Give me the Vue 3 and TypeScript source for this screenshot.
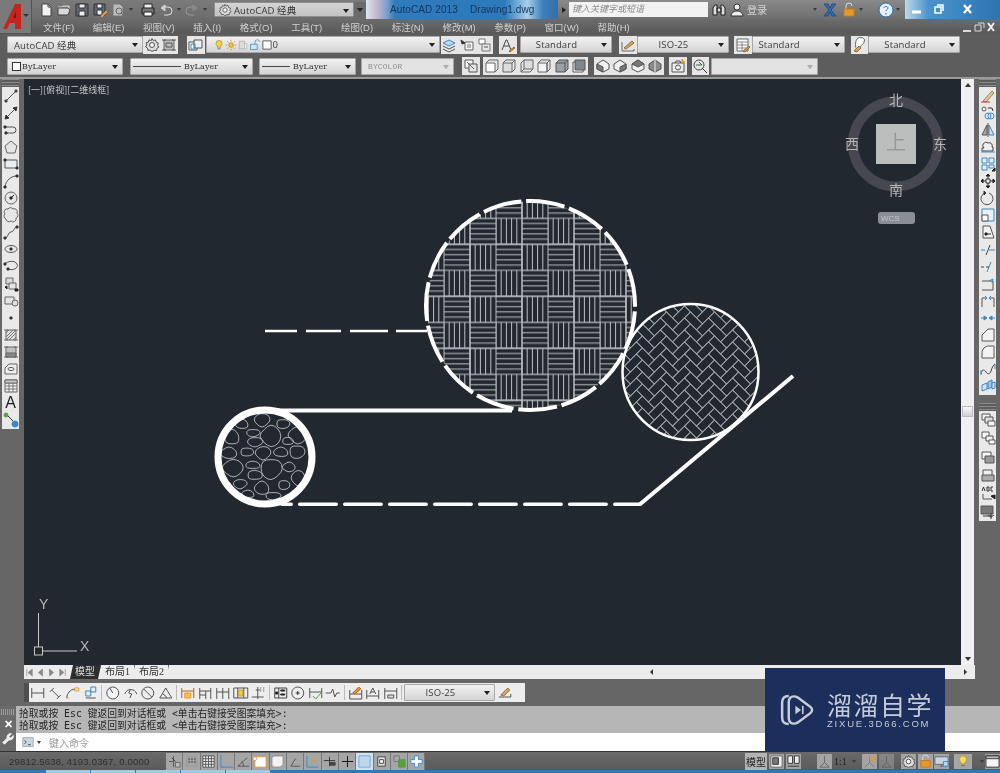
<template>
  <div class="cad">
    <header class="head">
      <div class="logo">
        <svg width="32" height="32" viewBox="0 0 32 32">
          <path d="M3 29 15 4h6v25h-6v-6h-5l-3 6Z" fill="#c4261d" />
          <path d="M13 18h3v-7Z" fill="#7d1712" />
          <path d="M23 14h6l-3 3Z" fill="#333" />
        </svg>
      </div>
      <div class="title">
        <div class="qat">
          <template v-for="q in qat" :key="q">
            <i v-if="q.startsWith('caret')" class="caret" />
            <Ico v-else :name="q" class="qat-ico" />
          </template>
        </div>
        <div class="combo wk-top">
          <Ico name="gear" :size="14" />
          <span>AutoCAD 经典</span>
          <b class="arrow" />
        </div>
        <div class="more"><b class="arrow" /></div>
        <div class="glass">
          <span class="app">AutoCAD 2013</span>
          <span class="doc">Drawing1.dwg</span>
        </div>
        <div class="search-wrap">
          <i class="play" />
          <div class="search">键入关键字或短语</div>
          <Ico name="binoc" class="ti" />
          <Ico name="user" class="ti user" />
          <span class="login">登录</span>
          <i class="caret far" />
          <Ico name="xapp" class="ti" />
          <Ico name="lockapp" class="ti" />
          <i class="caret" />
          <Ico name="help" class="ti help" />
          <i class="caret" />
        </div>
        <div class="win">
          <svg width="80" height="16" viewBox="0 0 80 16">
            <path d="M7 10h9" stroke="#fff" stroke-width="3" />
            <path d="M30 5h6v6h-6ZM32 3h6v6" stroke="#fff" stroke-width="1.5" fill="none" />
            <path d="M59 3l7 8M66 3l-7 8" stroke="#fff" stroke-width="2.4" />
          </svg>
        </div>
      </div>
      <nav class="menu">
        <span v-for="m in menus" :key="m">{{ m }}</span>
        <div class="doc-btns">
          <svg width="32" height="12" viewBox="0 0 32 12">
            <path d="M0 10h8" stroke="#ddd" stroke-width="2" />
            <path d="M12 4h6v6h-6ZM15 2h6v5" stroke="#ddd" fill="none" />
            <path d="M25 2l6 8M31 2l-6 8" stroke="#eee" stroke-width="2" />
          </svg>
        </div>
      </nav>
    </header>

    <div class="row row1">
      <template v-for="(it, i) in row1" :key="i">
        <i v-if="it.gap" class="gap" :style="{ width: it.gap + 'px' }" />
        <div v-else-if="it.icon" class="tool"><Ico :name="it.icon" /></div>
        <div v-else class="combo" :class="it.align" :style="{ width: it.w + 'px' }">
          <Ico v-for="p in it.pre" :key="p" :name="p" :size="12" class="pre" />
          <span>{{ it.label }}</span>
          <b class="arrow" />
        </div>
      </template>
    </div>

    <div class="row row2">
      <template v-for="(it, i) in row2" :key="i">
        <i v-if="it.gap" class="gap" :style="{ width: it.gap + 'px' }" />
        <div v-else-if="it.icon" class="tool"><Ico :name="it.icon" /></div>
        <div v-else class="combo mono" :class="it.align" :style="{ width: it.w + 'px' }">
          <i v-if="it.swatch" class="swatch" />
          <i v-if="it.line" class="ltype" :style="{ width: it.line + 'px' }" />
          <span>{{ it.label }}</span>
          <b class="arrow" />
        </div>
      </template>
    </div>

    <main class="main">
      <aside class="side left">
        <div class="grip" />
        <div class="bar">
          <template v-for="n in leftTools" :key="n">
            <span v-if="n === 'A'" class="glyph">A</span>
            <Ico v-else :name="n" />
          </template>
        </div>
      </aside>

      <div class="canvas">
        <svg class="draw" viewBox="24 79 937 586">
          <defs>
            <pattern id="basket" x="496" y="218.3" width="52" height="52" patternUnits="userSpaceOnUse">
              <path :d="basketPath" stroke="#bcbec1" fill="none" stroke-width="1" />
            </pattern>
            <clipPath id="herring-clip"><circle cx="690.5" cy="372" r="68" /></clipPath>
            <clipPath id="gravel-clip"><circle cx="265" cy="457" r="46" /></clipPath>
          </defs>

          <text x="28" y="93" class="vp">[一][俯视][二维线框]</text>

          <!-- hatched profile -->
          <circle cx="530.5" cy="305.5" r="104" fill="url(#basket)" />
          <circle cx="530.5" cy="305.5" r="104.5" class="thick" stroke-dasharray="39 4.77" stroke-dashoffset="-6" />
          <path :d="herringPath" clip-path="url(#herring-clip)" stroke="#a9acb0" fill="none" />
          <circle cx="690.5" cy="372" r="68" class="mid" />
          <path :d="gravelPath" clip-path="url(#gravel-clip)" stroke="#aeb0b3" fill="none" />
          <circle cx="265" cy="457" r="47" class="fat" />
          <path d="M278 410.500H512" class="thick" />
          <path d="M265 331H427" class="dash" stroke-dasharray="32 9 35 9 38 8 32 0" />
          <path d="M640 504.300 793 376" class="thick" />
          <path d="M282 504.300H640" class="thick thin4" stroke-linecap="round" stroke-dasharray="36.500 8.500" stroke-dashoffset="27.300" />

          <!-- ucs -->
          <g class="ucs">
            <path d="M38.500 613v34M43 651h34" />
            <rect x="34.500" y="647" width="8" height="8" />
            <text x="39" y="609">Y</text>
            <text x="80" y="651">X</text>
          </g>

          <!-- view cube -->
          <circle cx="895.500" cy="144" r="42.500" class="ring" />
          <rect x="876" y="124" width="40" height="40" fill="#bcbdbd" />
          <text x="896" y="150" class="cube-top">上</text>
          <text x="896" y="105" class="dir">北</text>
          <text x="896" y="195" class="dir">南</text>
          <text x="852" y="149" class="dir">西</text>
          <text x="940" y="149" class="dir">东</text>
          <rect x="878" y="212" width="37" height="12" rx="3" fill="#8b8e96" />
          <text x="881" y="221" class="wcs">WCS</text>
        </svg>
      </div>

      <div class="vscroll">
        <b class="up" />
        <i class="thumb" />
        <b class="down" />
      </div>

      <aside class="side right">
        <div class="grip" />
        <div class="bar modify">
          <Ico v-for="n in rightTools" :key="n" :name="n" />
        </div>
        <div class="grip second" />
        <div class="bar order">
          <Ico v-for="n in orderTools" :key="n" :name="n" />
        </div>
      </aside>
    </main>

    <div class="tabs">
      <div class="tabs-l">
        <Ico v-for="n in navs" :key="n" :name="n" :size="11" class="nav" />
        <span class="tab on">模型</span>
        <span class="tab">布局1</span>
        <span class="tab">布局2</span>
      </div>
      <div class="hscroll"><b class="lt" /><b class="rt" /></div>
    </div>

    <div class="dimband">
      <div class="dimbar">
        <template v-for="(n, i) in dimTools" :key="i">
          <i v-if="n === '|'" class="sep" />
          <div v-else-if="n === 'combo'" class="combo center dimcombo"><span>ISO-25</span><b class="arrow" /></div>
          <Ico v-else :name="n" class="dim-ico" />
        </template>
      </div>
    </div>

    <section class="cmd">
      <div class="cmd-side">
        <i class="dots" />
        <span class="close">✕</span>
        <Ico name="wrench" :size="14" />
      </div>
      <div class="cmd-body">
        <div class="history">
          <p v-for="n in 2" :key="n">拾取或按 Esc 键返回到对话框或 &lt;单击右键接受图案填充&gt;:</p>
        </div>
        <div class="input">
          <Ico name="prompt" :size="14" />
          <i class="caret dark" />
          <span>键入命令</span>
        </div>
      </div>
    </section>

    <footer class="status">
      <span class="coords">29812.5638, 4193.0367, 0.0000</span>
      <div class="toggles">
        <div v-for="n in toggles" :key="n" class="toggle" :class="{ active: n === 'trans' }"><Ico :name="n" :size="15" /></div>
      </div>
      <div class="st-right">
        <span class="model">模型</span>
        <Ico name="layout" :size="15" class="m2" />
        <Ico name="viewsplit" :size="15" class="m2" />
        <Ico name="anno" :size="15" class="scale" />
        <span class="ratio">1:1</span>
        <i class="caret dark ratio-caret" />
        <Ico name="annoy" :size="15" class="m4" />
        <Ico name="anno" :size="15" class="m2 faded" />
        <Ico name="gear" :size="15" class="m7" />
        <Ico name="lockapp" :size="15" class="m2" />
        <Ico name="hw" :size="15" class="m1" />
        <div class="bulb"><Ico name="bulb" :size="14" /></div>
        <i class="caret dark bulb-caret" />
        <Ico name="clean" :size="15" />
      </div>
    </footer>
    <div class="taskbar">
      <i v-for="n in 5" :key="n" class="task" />
    </div>

    <div class="mark">
      <svg width="38" height="38" viewBox="0 0 42 46" fill="none" stroke="#c6ccd6">
        <path d="M11 6C6 6 3 9 3 14v18c0 5 3 8 8 8" stroke-width="3" />
        <path d="M13 8c2-2 6-2 9 0l15 11c3 2 3 6 0 8L22 38c-3 2-7 2-9 0-1-1-2-3-2-5V13c0-2 1-4 2-5Z" stroke-width="3" />
        <path d="M19 18v10l7-5Z" fill="#c6ccd6" stroke="none" />
        <path d="M28 18v10" stroke-width="2" />
      </svg>
      <div class="mark-text">
        <strong>溜溜自学</strong>
        <small>ZIXUE.3D66.COM</small>
      </div>
    </div>
  </div>
</template>

<script setup lang="ts">
import { h } from 'vue'
import type { FunctionalComponent } from 'vue'

type Part = [string, string?, string?]

const INK = '#5c5c5c'
const BL = '#3d87c4'
const OR = '#e39a2d'
const GR = '#5a9e46'
const RD = '#c0392b'
const PALE = '#e6e6e6'

const icons: Record<string, Part[]> = {
  new: [['M4 2h6l3 3v9H4Z', '#444', '#f2f2f2'], ['M10 2v3h3', '#444']],
  open: [['M2 5h4l1-1h6v3', '#ddd', '#999'], ['M2 6h10l2 2-2 5H2Z', '#444', '#d8d8d8']],
  save: [['M2 2h12v12H2Z', '#333', '#5d6873'], ['M5 2h6v4H5ZM5 9h6v5H5Z', '#333', '#eee']],
  saveas: [['M2 2h11v11H2Z', '#333', '#5d6873'], ['M5 2h5v4H5ZM5 8h5v5H5Z', '#333', '#eee'], ['M9 14l5-5 1 1-5 5Z', OR, OR]],
  plotp: [['M3 2h7l3 3v9H3Z', '#777', '#bbb'], ['M11 11l3 3M6 9a3 3 0 1 0 6 0 3 3 0 0 0-6 0', '#666']],
  print: [['M4 6V2h8v4', '#222', '#eee'], ['M2 6h12v6H2Z', '#222', '#777'], ['M4 10h8v4H4Z', '#222', '#fff']],
  undo: [['M3 6l4-3v2h3a4 4 0 0 1 0 8H6', '#ddd'], ['M3 6l4 3V3Z', '#ccc', '#ccc']],
  redo: [['M13 6 9 3v2H6a4 4 0 0 0 0 8h4', '#999'], ['M13 6 9 9V3Z', '#888', '#888']],
  gear: [['M8 1.500l1.200 2 2.300-.6.6 2.300 2.300.8-.8 2.300 1.400 1.700-2 1.200-.4 2.300-2.300-.2L8 14.500l-1.800-1.400-2.300.2-.4-2.300-2-1.200L2.900 8 2.100 5.700l2.300-.5.6-2.300 2.300.6Z', '#555', '#ddd'], ['M5.500 8a2.500 2.500 0 1 0 5 0 2.500 2.500 0 0 0-5 0', '#555', '#f4f4f4']],
  wksp: [['M3 3h10v10H3Z', '#666', '#bbb'], ['M1 3h4M11 3h4M1 13h4M11 13h4M5 6h6v4H5Z', '#555']],
  binoc: [['M2 13V6l2-3h2v10ZM14 13V6l-2-3h-2v10ZM6 6h4v4H6Z', '#222', '#ddd']],
  user: [['M5 5a3 3 0 1 0 6 0 3 3 0 0 0-6 0', '#333', '#eee'], ['M2 14c0-3 3-5 6-5s6 2 6 5Z', '#333', '#eee']],
  xapp: [['M2 2l5 6-5 6h4l2-4 2 4h4L9 8l5-6h-4L8 6 6 2Z', '#1f4f8c', '#2f6db3']],
  lockapp: [['M5 7V4a3 3 0 0 1 6 0', '#ddd'], ['M3 7h10v7H3Z', '#c77a1a', OR]],
  help: [['M1 8a7 7 0 1 0 14 0A7 7 0 0 0 1 8', '#2b6cb0', '#e6f0fa'], ['M6 6c0-2 4-2 4 0 0 1.500-2 1.500-2 3M8 11v1.500', '#2b6cb0']],
  layerp: [['M1 5h8v8H1Z', '#555', '#fff'], ['M6 3h8v8H6Z', '#555', '#e8f0f6'], ['M3 7h4v5H3Z', BL, 'none']],
  bulbon: [['M4 6a4 4 0 1 1 8 0c0 2-2 3-2 5H6c0-2-2-3-2-5Z', '#a98b1a', '#f1d34c'], ['M6 13h4', '#666']],
  sun: [['M5 8a3 3 0 1 0 6 0 3 3 0 0 0-6 0', '#b57f18', '#f2c744'], ['M8 1v2M8 13v2M1 8h2M13 8h2M3 3l1.500 1.500M11.500 11.500 13 13M13 3l-1.500 1.500M3 13l1.500-1.500', '#b57f18']],
  frz: [['M3 3h7v10H3Z', '#aaa', '#ddd'], ['M10 6h3v7h-3Z', '#bbb', '#eee']],
  unlock: [['M8 7V4a3 3 0 0 1 6 0', BL], ['M2 7h9v7H2Z', BL, '#cfe4f5']],
  square: [['M2.500 2.500h11v11h-11Z', '#333', '#fff']],
  lay1: [['M2 6l6-3 6 3-6 3Z', BL, '#bcd8ee'], ['M2 9l6 3 6-3M2 12l6 3 6-3', '#555']],
  lay2: [['M6 5h8v8H6Z', '#666', '#f4f4f4'], ['M2 3l4 3-3 1Z', '#333', '#333'], ['M8 8h4M8 10h4', '#777']],
  lay3: [['M3 2h6v5H3Z', '#777', '#fff'], ['M6 7h8v7H6Z', '#777', '#e8e8e8'], ['M8 10h4', '#555']],
  textst: [['M2 13 6 3h1l4 10M4 9h5', '#444'], ['M9 14l5-4 1 1-5 4Z', '#9a6a33', OR]],
  dimst: [['M2 5v9h12v-2', '#666'], ['M4 11l8-7 2 2-8 6Z', '#9a6a33', '#d9a663']],
  tablest: [['M2 2h11v12H2Z', '#666', '#fff'], ['M2 5h11M2 8h11M2 11h11M7 5v9', '#888'], ['M8 14l6-5 1 1-5 5Z', '#9a6a33', OR]],
  mleaderst: [['M6 2a4 3 0 0 1 7 3c0 2-5 5-7 8-2-3-2-8 0-11Z', '#666', '#fff'], ['M3 14l5-5 2 2-4 4Z', '#9a6a33', '#d9a663']],
  plotst: [['M2 2h8v8H2Z', '#555', '#fff'], ['M6 6h8v8H6Z', '#555', '#e4e4e4'], ['M4 4l7 7', '#666']],
  cube0: [['M2 5h9v9H2Z', '#666', '#fff'], ['M2 5l3-3h9v9l-3 3', '#666']],
  cube1: [['M2 5h9v9H2Z', '#666', '#ddd'], ['M2 5l3-3h9v9l-3 3M11 5l3-3', '#666']],
  cube2: [['M5 2h9v9H5Z', '#666', '#ddd'], ['M2 5l3-3M2 5v9h9l3-3M2 14l3-3', '#666']],
  cube3: [['M2 5h9v9H2Z', '#666', '#f4f4f4'], ['M2 5l3-3h9v9l-3 3V5l3-3', '#666']],
  cube4: [['M2 5l3-3h9v9l-3 3H2Z', '#555', '#9aa2a9'], ['M2 5h9v9M11 5l3-3', '#555']],
  cube5: [['M2 4h10v10H2Z', '#555', '#fff'], ['M4 2h10v10H4Z', '#555', '#7f878e']],
  iso1: [['M8 2l6 4v5l-6 3-6-3V6Z', '#555', '#f0f0f0'], ['M2 6l6 3v5l-6-3Z', '#555', '#777']],
  iso2: [['M8 2l6 4v5l-6 3-6-3V6Z', '#555', '#f0f0f0'], ['M14 6 8 9v5l6-3Z', '#555', '#777']],
  iso3: [['M8 2l6 4v5l-6 3-6-3V6Z', '#555', '#f0f0f0'], ['M2 6l6-4 6 4-6 3Z', '#555', '#777']],
  iso4: [['M8 2l6 4v5l-6 3-6-3V6Z', '#555', '#888'], ['M8 2v12', '#eee']],
  camera: [['M2 5h12v9H2Z', '#555', '#eee'], ['M5 5l1-2h4l1 2M5.500 9.500a2.500 2.500 0 1 0 5 0 2.500 2.500 0 0 0-5 0', '#555'], ['M12 1l1 2 2 1-2 1-1-1Z', OR, OR]],
  zoomp: [['M2 7a5 5 0 1 0 10 0A5 5 0 0 0 2 7', '#444', '#e6e6e6'], ['M10 10l5 5', '#333'], ['M4 7h6L7 4', '#2f6f3a']],
  line: [['M3 13 13 3', '#555'], ['M2 12h2v2H2ZM12 2h2v2h-2Z', '#444', '#444']],
  xline: [['M3 13 13 3', '#555'], ['M2 14l1-4 3 3ZM14 2l-1 4-3-3Z', '#333', '#333']],
  pline: [['M2 5h8a3 3 0 0 1 0 6H3', '#555'], ['M1 4h2v2H1ZM2 10h2v2H2Z', '#333', '#333']],
  polygon: [['M8 2l6 5-2 7H4L2 7Z', '#666', PALE]],
  rect: [['M2 4h12v8H2Z', '#555', '#e8eef3'], ['M1 3h2v2H1ZM13 11h2v2h-2Z', '#333', '#333']],
  arc: [['M2 14C3 7 8 3 14 3', '#555'], ['M1 13h2v2H1ZM13 2h2v2h-2Z', '#333', '#333']],
  circle: [['M2 8a6 6 0 1 0 12 0A6 6 0 0 0 2 8', '#666', '#e6e6e6'], ['M8 8l3-3', '#222'], ['M7 7h2v2H7Z', '#222', '#222']],
  cloud: [['M5 2a3 3 0 0 1 5 0 3 3 0 0 1 4 4 3 3 0 0 1-1 5 3 3 0 0 1-5 3 3 3 0 0 1-5-2 3 3 0 0 1-1-5 3 3 0 0 1 3-5Z', '#666', PALE]],
  spline: [['M2 14C5 14 5 8 8 8s3-5 6-5', '#555'], ['M1 13h2v2H1ZM13 2h2v2h-2Z', '#333', '#333']],
  ellipse: [['M14 8c0 2-3 3.500-6 3.500S2 10 2 8s3-3.500 6-3.500S14 6 14 8Z', '#555', '#e6e6e6'], ['M7 7h2v2H7Z', '#333', '#333']],
  earc: [['M2 6c2-3 10-4 12 0s-4 7-9 5', '#555'], ['M4 10h2v2H4ZM1 5h2v2H1Z', '#333', '#333']],
  insert: [['M3 2h7v6H3Z', '#666', '#ddd'], ['M6 7h7v6H6Z', '#666', PALE], ['M2 11l2-1v3ZM12 13h3v2h-3Z', '#222', '#222']],
  block: [['M2 4h9v7H2Z', '#666', PALE], ['M9 10a3 3 0 1 0 6 0 3 3 0 0 0-6 0', '#666', '#ddd']],
  point: [['M7 7h2v2H7Z', '#333', '#333']],
  hatch: [['M3 3h10v10H3Z', '#666', '#e0e0e0'], ['M3 6l3-3M3 10l7-7M3 13 13 3M6 13l7-7M10 13l3-3M1 3h4M11 3h4M1 13h4M11 13h4', '#777']],
  gradient: [['M3 3h10v10H3Z', '#666', '#c0c0c0'], ['M3 9h10v4H3Z', '#666', '#888'], ['M1 3h4M11 3h4M1 13h4M11 13h4', '#666']],
  region: [['M2 7l4-4h8v10H2Z', '#666', '#eee'], ['M5 8c0-2 6-2 6 0s-6 2-6 0Z', '#555']],
  table: [['M2 2h12v12H2Z', '#666', '#f4f4f4'], ['M2 5h12M2 8h12M2 11h12M6 5v9M10 5v9', '#777'], ['M2 2h12v3H2Z', '#666', '#c9c9c9']],
  addsel: [['M1 3a2 2 0 1 0 4 0 2 2 0 0 0-4 0', GR, GR], ['M9 12a3 3 0 1 0 6 0 3 3 0 0 0-6 0', BL, BL], ['M5 4l5 5', '#333']],
  erase: [['M3 13 12 3l2 2-8 9Z', '#a08354', '#dfc79d'], ['M1 14h9', RD]],
  copy: [['M2 4a2 2 0 1 0 4 0 2 2 0 0 0-4 0', '#555', '#fff'], ['M8 11a3 3 0 1 0 6 0 3 3 0 0 0-6 0M5 11a3 3 0 1 0 6 0 3 3 0 0 0-6 0', BL], ['M8 3h4l1 3', '#333']],
  mirror: [['M7 3v10H2Z', '#555', '#aaa'], ['M9 3v10h5Z', BL, '#cfe4f5'], ['M8 1v14', '#555']],
  offset: [['M4 9a3 3 0 0 1 4-5 3 3 0 0 1 4 4h1v4H2V9Z', '#444', '#eee'], ['M1 13h14', BL]],
  array: [['M2 2h5v5H2ZM9 2h5v5H9ZM2 9h5v5H2ZM9 9h5v3H9Z', BL, '#e8f2fa'], ['M12 15l3-3v3Z', '#222', '#222']],
  move: [['M8 1v14M1 8h14', '#333'], ['M6 3l2-2 2 2ZM6 13l2 2 2-2ZM3 6 1 8l2 2ZM13 6l2 2-2 2Z', '#222', '#222'], ['M6 6h4v4H6Z', '#333', '#eee']],
  rotate: [['M5 3a6 6 0 1 0 4 0', '#555'], ['M4 1l2 2-2 2Z', '#333', '#333']],
  scale: [['M2 2h12v12H2Z', BL, '#e8f2fa'], ['M2 8h6v6H2Z', '#555', '#fff']],
  stretch: [['M3 2h7l4 12H3Z', '#555', '#f2f2f2'], ['M7 10h4', '#222'], ['M5 9h2v2H5Z', '#222', '#222']],
  trim: [['M10 3 6 13', '#444'], ['M1 8h4M9 8h6', BL]],
  extend: [['M11 3 7 13', BL], ['M1 8h3M6 8h3', '#444']],
  brk1: [['M2 5h11v9H2', '#555'], ['M9 5l4-2-1 4', BL]],
  brk2: [['M2 14V5h4M10 5h4v9', '#555'], ['M5 3l2 2-2 2M11 3 9 5l2 2', BL]],
  join: [['M1 8h5M10 8h5', BL], ['M4 6l3 2-3 2ZM12 6 9 8l3 2Z', BL, BL]],
  chamfer: [['M2 14V8l6-6h6v12Z', '#555', '#f2f2f2']],
  fillet: [['M2 14V9c0-4 3-7 7-7h5v12Z', '#555', '#f2f2f2']],
  blend: [['M1 13c1-5 3-5 5-2s4 2 5-1 2-6 4-7', '#444'], ['M1 14V9M15 3v5', BL]],
  explode: [['M2 7l5-2v6l-5 2Z', BL, '#cfe4f5'], ['M8 4l4-2v7l-4 2Z', BL, '#9fc8e8'], ['M12 5l3-1v6l-3 1Z', BL, '#cfe4f5']],
  ord1: [['M2 2h8v6H2Z', '#555', '#f4f4f4'], ['M5 5h8v6H5Z', '#555', '#ddd'], ['M8 9h7v5H8Z', '#555', '#f4f4f4']],
  ord2: [['M2 2h7v6H2Z', '#555', '#fff'], ['M6 6h7v5H6Z', '#555', '#f2f2f2'], ['M9 10h6v4H9Z', '#555', '#fff']],
  ord3: [['M2 3h9v7H2Z', '#555', '#f8f8f8'], ['M5 7h9v7H5Z', '#555', '#999']],
  ord4: [['M3 3h9v7H3Z', '#555', '#eee'], ['M2 8h12v6H2Z', '#555', '#aaa']],
  abc: [['M2 6 3.500 2 5 6M7 2h2v4H7ZM13 2h-2v4h2', '#333'], ['M3 9v5h9', '#555'], ['M11 11l4 3v-4Z', '#222', '#222']],
  hatchb: [['M1 2h12v8H1Z', '#555', '#777'], ['M3 12h9M11 9v6', '#333'], ['M8 11l3 2 3-2', '#333']],
  dimlin: [['M2 3v10M14 3v10M2 8h12', '#555']],
  dimali: [['M2 7l4-4M9 14l4-4M4 5l7 7', '#555']],
  dimarc: [['M2 13a9 9 0 0 1 8-9', '#555'], ['M10 3h4v3h-4ZM2 13h2', OR]],
  dimord: [['M8 2h5v5H8ZM3 6h5v5H3Z', BL], ['M3 13h10', '#555']],
  dimrad: [['M2 8a6 6 0 1 0 12 0A6 6 0 0 0 2 8', '#555', '#f5f5f5'], ['M8 8l-3-5', '#555']],
  dimjog: [['M2 9c2-6 10-6 12 0', '#555'], ['M8 4l-2 4 3 1-2 4', '#555']],
  dimdia: [['M2 8a6 6 0 1 0 12 0A6 6 0 0 0 2 8', '#555'], ['M4 4l8 8', '#555']],
  dimang: [['M2 13h12L8 3Z', '#555'], ['M5 9a6 6 0 0 1 4 4', '#555']],
  dimq: [['M2 3v10M14 3v10M2 6h12', '#a8651e'], ['M5 8h6v5H5Z', OR, '#f3c24e']],
  dimbase: [['M2 3v11M13 3v11M2 6h11', '#555'], ['M2 10h6M8 6v8', '#555']],
  dimcont: [['M2 3v11M8 3v11M14 3v11M2 7h12', '#555']],
  dimsp: [['M1 3h14v10H1Z', '#555'], ['M5 3v10M11 3v10', '#555'], ['M6 5h4v6H6Z', '#c8a21e', '#eccf4b']],
  dimbrk: [['M8 2v12M2 12h12', '#555'], ['M11 2v5M14 2v5', '#999'], ['M6 5h4', '#555']],
  tol: [['M2 3h12v10H2Z', '#444'], ['M6 3v10', '#444'], ['M3 7h2v2H3ZM8 5h4v1H8ZM8 9h4v1H8Z', '#222', '#222']],
  center: [['M2 8a6 6 0 1 0 12 0A6 6 0 0 0 2 8', '#555'], ['M6 8h4M8 6v4', '#333']],
  dimins: [['M2 3v10M14 3v10M2 7h12', '#555'], ['M5 11l3 3 6-7', GR]],
  dimjogl: [['M1 8h5l2-4 2 8 2-4h3', '#555']],
  dimedit: [['M2 5v9h12v-9M2 9h12', '#555'], ['M5 8l6-6 2 2-6 5Z', '#a8651e', OR]],
  dimtedit: [['M2 5v9M14 5v9M2 11h12', '#555'], ['M5 9l3-6 3 6M6 7h4', '#555']],
  dimupd: [['M2 3v11M14 3v11M2 6h12', '#555'], ['M5 10h6v3H5Z', '#555', '#ddd']],
  dimsave: [['M2 12h12V9', '#555'], ['M4 10l7-7 2 2-6 6Z', '#9a6a33', '#d9a663']],
  infer: [['M2 8h5M7 2v12', '#555'], ['M9 9h5v5H9Z', '#666', '#bbb'], ['M5 4l4 4', '#333']],
  snapm: [['M3 3h10v10H3Z', '#9a9a9a'], ['M5 5h1v1H5ZM8 5h1v1H8ZM11 5h1v1h-1ZM5 8h1v1H5ZM8 8h1v1H8ZM11 8h1v1h-1Z', '#666', '#666']],
  grid: [['M2 2h12v12H2Z', '#555', '#eee'], ['M5 2v12M8 2v12M11 2v12M2 5h12M2 8h12M2 11h12', '#555']],
  ortho: [['M2 1v13h13', BL]],
  polar: [['M2 13h12M2 13 12 4M8 13a6 6 0 0 0-2-5', '#555']],
  osnap: [['M2 3h12v11H2Z', OR, '#fff'], ['M2 3a2 2 0 1 0 .01 0', OR, '#f4f4f4']],
  otrack: [['M4 2h10v9l-3 3H2V4Z', '#888', '#f2f2f2'], ['M2 14l2-2', OR]],
  ducs: [['M3 13 8 5M3 13h10', '#555']],
  dyn: [['M2 2v12h12', BL], ['M3 13 13 3', OR], ['M7 6h4v4H7Z', OR]],
  lwt: [['M2 7h12', '#333', 'none'], ['M8 3v10', '#333'], ['M8 9h6v3H8Z', '#444', '#444']],
  cross: [['M8 2v12M2 8h12', '#111']],
  trans: [['M2 2h12v12H2Z', '#7aa9d6', '#bdd6ec']],
  qp: [['M4 3h8v10H4Z', '#444', '#ddd'], ['M6 6h4v4H6Z', '#444', '#fff']],
  cycle: [['M7 6h7v8H7Z', GR, GR], ['M2 2h6v6H2Z', '#777', 'none']],
  plus: [['M6 2h4v4h4v4h-4v4H6v-4H2V6h4Z', BL, '#fff']],
  layout: [['M2 2h12v12H2Z', '#666', '#eee'], ['M4 4h6v7H4Z', '#333', '#777']],
  viewsplit: [['M2 2h5v8H2ZM9 2h5v8H9Z', '#333', '#eee'], ['M2 13h12', '#333']],
  anno: [['M8 2v7M8 9l-5 5M8 9l5 5M3 14h10', '#666']],
  annoy: [['M8 3v6M8 9l-5 5M8 9l5 5', '#777'], ['M11 2l1 2 2 1-2 1-1 2-1-2-2-1 2-1Z', OR, OR]],
  hw: [['M1 3h14v8H1Z', '#667', '#cbd5df'], ['M6 13h4M8 11v2', '#667'], ['M10 8h5v5h-5Z', BL, '#bcd8ee']],
  bulb: [['M4 6a4 4 0 1 1 8 0c0 2-2 3-2 5H6c0-2-2-3-2-5Z', '#b99b22', '#f4dd60'], ['M6 13h4', '#666']],
  clean: [['M1 2h14v12H1Z', '#333', '#f4f4f4'], ['M1 2h14v3H1Z', '#333', '#bbb']],
  wrench: [['M14 4l-3 3-2-2 3-3a4 4 0 0 0-5 5L2 12l2 2 5-5a4 4 0 0 0 5-5Z', '#eee', '#eee']],
  prompt: [['M2 3h12v10H2Z', '#9aa7b5', '#cbd5df'], ['M4 6l2 2-2 2M8 11h3', '#445']],
  first: [['M4 3v10', '#888'], ['M12 3v10L6 8Z', '#888', '#888']],
  prev: [['M11 3v10L5 8Z', '#888', '#888']],
  next: [['M5 3v10l6-5Z', '#888', '#888']],
  last: [['M12 3v10', '#888'], ['M4 3v10l6-5Z', '#888', '#888']],
}

const Ico: FunctionalComponent<{ name: string; size?: number }> = (p) =>
  h(
    'svg',
    { viewBox: '0 0 16 16', width: p.size ?? 16, height: p.size ?? 16 },
    (icons[p.name] ?? []).map(([d, stroke, fill]) => h('path', { d, stroke: stroke ?? INK, fill: fill ?? 'none' })),
  )
Ico.props = ['name', 'size']

const qat = ['new', 'open', 'save', 'saveas', 'plotp', 'caret1', 'print', 'undo', 'caret2', 'redo', 'caret3']
const navs = ['first', 'prev', 'next', 'last']

const menus = ['文件(F)', '编辑(E)', '视图(V)', '插入(I)', '格式(O)', '工具(T)', '绘图(D)', '标注(N)', '修改(M)', '参数(P)', '窗口(W)', '帮助(H)']

interface Item {
  gap?: number
  icon?: string
  w?: number
  label?: string
  align?: string
  pre?: string[]
  swatch?: boolean
  line?: number
}

const row1: Item[] = [
  { gap: 7 },
  { w: 136, label: 'AutoCAD 经典' },
  { icon: 'gear' },
  { icon: 'wksp' },
  { gap: 9 },
  { icon: 'layerp' },
  { gap: 1 },
  { w: 234, label: '0', pre: ['bulbon', 'sun', 'frz', 'unlock', 'square'] },
  { gap: 1 },
  { icon: 'lay1' },
  { icon: 'lay2' },
  { icon: 'lay3' },
  { gap: 6 },
  { icon: 'textst' },
  { gap: 3 },
  { w: 92, label: 'Standard', align: 'center' },
  { gap: 7.5 },
  { icon: 'dimst' },
  { w: 92, label: 'ISO-25', align: 'center' },
  { gap: 5.5 },
  { icon: 'tablest' },
  { w: 93, label: 'Standard' },
  { gap: 6 },
  { icon: 'mleaderst' },
  { w: 92, label: 'Standard', align: 'center' },
]

const row2: Item[] = [
  { gap: 7 },
  { w: 116, label: 'ByLayer', swatch: true },
  { gap: 7 },
  { w: 123, label: 'ByLayer', line: 48, align: 'spread' },
  { gap: 6 },
  { w: 97, label: 'ByLayer', line: 28, align: 'spread' },
  { gap: 5 },
  { w: 93, label: 'BYCOLOR', align: 'off' },
  { gap: 8 },
  { icon: 'plotst' },
  { gap: 3.5 },
  { icon: 'cube0' },
  { icon: 'cube1' },
  { icon: 'cube2' },
  { icon: 'cube3' },
  { icon: 'cube4' },
  { icon: 'cube5' },
  { gap: 6 },
  { icon: 'iso1' },
  { icon: 'iso2' },
  { icon: 'iso3' },
  { icon: 'iso4' },
  { gap: 5 },
  { icon: 'camera' },
  { gap: 5 },
  { icon: 'zoomp' },
  { gap: 2 },
  { w: 107, label: '', align: 'off' },
]

const leftTools = ['line', 'xline', 'pline', 'polygon', 'rect', 'arc', 'circle', 'cloud', 'spline', 'ellipse', 'earc', 'insert', 'block', 'point', 'hatch', 'gradient', 'region', 'table', 'A', 'addsel']
const rightTools = ['erase', 'copy', 'mirror', 'offset', 'array', 'move', 'rotate', 'scale', 'stretch', 'trim', 'extend', 'brk1', 'brk2', 'join', 'chamfer', 'fillet', 'blend', 'explode']
const orderTools = ['ord1', 'ord2', 'ord3', 'ord4', 'abc', 'hatchb']
const dimTools = ['dimlin', 'dimali', 'dimarc', 'dimord', '|', 'dimrad', 'dimjog', 'dimdia', 'dimang', '|', 'dimq', 'dimbase', 'dimcont', 'dimsp', 'dimbrk', '|', 'tol', 'center', 'dimins', 'dimjogl', '|', 'dimedit', 'dimtedit', 'dimupd', '|', 'combo', 'dimsave']
const toggles = ['infer', 'snapm', 'grid', 'ortho', 'polar', 'osnap', 'otrack', 'ducs', 'dyn', 'lwt', 'cross', 'trans', 'qp', 'cycle', 'plus']

// hatch geometry, worked out once
const basketStep = 26 / 5
function basketCell(ox: number, oy: number, vertical: boolean): string {
  let d = ''
  for (let i = 0; i < 5; i++) {
    const t = i * basketStep
    d += vertical ? `M${ox + t} ${oy}v26` : `M${ox} ${oy + t}h26`
  }
  return d + `M${ox} ${oy}h26v26h-26Z`
}
const basketPath = basketCell(0, 0, true) + basketCell(26, 0, false) + basketCell(0, 26, false) + basketCell(26, 26, true)

function herringbone(cx: number, cy: number, s: number): string {
  const k = s / Math.SQRT2
  const pt = (u: number, v: number) => `${(cx + (u - v) * k).toFixed(1)} ${(cy + (u + v) * k).toFixed(1)}`
  const box = (u: number, v: number, w: number, l: number) =>
    `M${pt(u, v)}L${pt(u + w, v)}L${pt(u + w, v + l)}L${pt(u, v + l)}Z`
  let d = ''
  for (let n = -12; n <= 12; n++) {
    for (let m = -5; m <= 5; m++) {
      d += box(n + 4 * m, n, 2, 1) + box(n + 2 + 4 * m, n - 1, 1, 2)
    }
  }
  return d
}
const herringPath = herringbone(690.5, 372, 8.5)

// gravel stones: cx, cy, rx, ry
const gravel: [number, number, number, number][] = [
  [262, 420, 8, 7], [242, 424, 7, 5], [283, 424, 7, 5], [298, 435, 10, 9],
  [232, 437, 8, 8], [253, 433, 7, 4], [271, 436, 11, 11], [288, 441, 6, 4],
  [255, 442, 8, 5], [229, 453, 9, 6], [247, 452, 7, 4.500], [263, 453, 8, 7],
  [281, 452, 8, 5], [297, 452, 8, 7], [233, 468, 11, 9], [253, 465, 8, 4],
  [271, 469, 11, 11], [289, 467, 7, 5], [255, 475, 8, 5], [240, 484, 7, 5],
  [262, 488, 8, 7], [284, 485, 6, 5], [298, 478, 7, 8], [248, 494, 7, 4], [273, 496, 8, 4],
]

// each stone is an uneven closed curve, so the fill doesn't read as plain ovals
function stone([cx, cy, rx, ry]: [number, number, number, number], seed: number): string {
  const n = 8
  const pts: [number, number][] = []
  for (let i = 0; i < n; i++) {
    const a = (i / n) * Math.PI * 2
    const f = 1 + 0.13 * Math.sin(seed * 2.3 + i * 2.7)
    pts.push([cx + Math.cos(a) * rx * f, cy + Math.sin(a) * ry * f])
  }
  const mid = (a: [number, number], b: [number, number]) => `${((a[0] + b[0]) / 2).toFixed(1)} ${((a[1] + b[1]) / 2).toFixed(1)}`
  let d = `M${mid(pts[n - 1], pts[0])}`
  pts.forEach((p, i) => {
    d += `Q${p[0].toFixed(1)} ${p[1].toFixed(1)} ${mid(p, pts[(i + 1) % n])}`
  })
  return d + 'Z'
}
const gravelPath = gravel.map((g, i) => stone(g, i + 1)).join('')
</script>

<style scoped>
.cad {
  position: relative;
  width: 1000px;
  height: 773px;
  overflow: hidden;
  display: flex;
  flex-direction: column;
  background: #5f5f5f;
  font-family: "Liberation Sans", "Noto Sans CJK SC", sans-serif;
  font-size: 10px;
  color: #333;
  filter: blur(0.3px);
}
svg {
  display: block;
  flex: none;
}
p {
  margin: 0;
}

/* title + menu */
.head {
  position: relative;
  display: grid;
  grid-template-columns: 32px 1fr;
  grid-template-rows: 19px 15px;
  flex: none;
  background: linear-gradient(#7b7b7b, #6c6c6c 55%, #595959);
}
.logo {
  grid-row: 1 / 3;
  background: #7a7a7a;
  border-right: 1px solid #555;
  border-bottom: 1px solid #555;
}
.title {
  display: flex;
  align-items: center;
  min-width: 0;
}
.qat {
  display: flex;
  align-items: center;
  padding-left: 5px;
  width: 182px;
  box-sizing: border-box;
  flex: none;
}
.qat-ico {
  width: 18px;
}
.caret {
  flex: none;
  width: 0;
  height: 0;
  margin: 0 2px;
  border: 2px solid transparent;
  border-top: 3px solid #3c3c3c;
  border-bottom: 0;
}
.qat .caret:nth-child(6) {
  margin-right: 6px;
}
.combo {
  display: flex;
  align-items: center;
  flex: none;
  height: 17px;
  padding: 0 14px 0 6px;
  position: relative;
  box-sizing: border-box;
  background: linear-gradient(#f2f2f2, #d4d4d4);
  border: 1px solid #a8a8a8;
  border-radius: 1px;
  font-family: "Open Sans", "Noto Sans CJK SC", sans-serif;
  font-size: 9.500px;
  letter-spacing: 0.1px;
  color: #3b3b3b;
  white-space: nowrap;
}
.combo.center {
  justify-content: center;
  padding-right: 24px;
}
.combo.spread {
  justify-content: flex-start;
  padding-left: 2px;
}
.combo.spread span {
  margin-left: 3px;
}
.combo.off {
  background: #e3e3e3;
  color: #8e8e8e;
}
.combo.off .arrow {
  border-top-color: #aaa;
}
.mono {
  font-family: "DejaVu Serif", serif;
  font-size: 8px;
  color: #333;
  padding-left: 4px;
}
.off.mono {
  font-family: "Liberation Mono", monospace;
  padding-left: 6px;
}
.arrow {
  position: absolute;
  right: 4px;
  top: 6px;
  width: 0;
  height: 0;
  border: 3px solid transparent;
  border-top: 4px solid #222;
  border-bottom: 0;
}
.wk-top {
  width: 140px;
  height: 15px;
  padding-left: 3px;
  gap: 2px;
  background: linear-gradient(#d4d4d4, #c2c2c2);
  border-color: #8e8e8e;
  color: #333;
}
.more {
  position: relative;
  width: 12px;
  height: 15px;
  flex: none;
  background: #6a6a6a;
}
.more .arrow {
  right: 3px;
  top: 6px;
}
.glass {
  flex: none;
  width: 192px;
  height: 19px;
  display: flex;
  align-items: center;
  box-sizing: border-box;
  padding-left: 24px;
  background: linear-gradient(90deg, #d8e6f0 0, #cdbbcf 5%, #7a9fcf 11%, #2f7bbb 15%, #2c79bb 72%, #a6d0ea 84%, #3b81bd 92%, #346ea5);
  color: #12355c;
  font-size: 10px;
  letter-spacing: 0.1px;
  font-family: "Liberation Sans", sans-serif;
  white-space: nowrap;
}
.doc {
  margin-left: 12px;
}
.search-wrap {
  display: flex;
  align-items: center;
  flex: none;
  width: 347px;
  height: 19px;
  background: linear-gradient(#8a8a8a, #6e6e6e);
}
.play {
  flex: none;
  width: 0;
  height: 0;
  margin: 0 3px 0 4px;
  border: 3px solid transparent;
  border-left: 4px solid #222;
  border-right: 0;
}
.search {
  flex: none;
  width: 139px;
  height: 15px;
  padding-left: 3px;
  box-sizing: border-box;
  background: #f2f2f2;
  color: #8a8a8a;
  font-style: italic;
  font-size: 9px;
  line-height: 15px;
}
.ti {
  margin-left: 3px;
}
.ti.user {
  margin-left: 2px;
}
.login {
  margin-left: 2px;
  color: #d4d4d4;
  font-size: 10px;
  white-space: nowrap;
}
.caret.far {
  margin-left: 46px;
  margin-right: 2px;
}
.help {
  margin-left: 13px;
}
.win {
  flex: 1;
  height: 19px;
  display: flex;
  justify-content: flex-end;
  align-items: center;
  padding-right: 16px;
  background: linear-gradient(90deg, #bcd9ee, #4a94cd 24%, #3a84c1 60%, #2d73ad);
}
.menu {
  display: flex;
  align-items: center;
  gap: 18.600px;
  padding-left: 11px;
  color: #d0d0d0;
  font-family: "Liberation Sans", "Noto Sans CJK SC", sans-serif;
  font-size: 9.500px;
  white-space: nowrap;
}
.doc-btns {
  position: absolute;
  right: 5px;
  top: 21px;
}

/* toolbars */
.row {
  display: flex;
  align-items: center;
  flex: none;
  background: #5d5d5d;
}
.row1 {
  height: 21px;
}
.row2 {
  height: 22px;
  border-bottom: 2px solid #9a9a9a;
}
.gap {
  flex: none;
}
.tool {
  flex: none;
  width: 17.500px;
  height: 18px;
  display: flex;
  align-items: center;
  justify-content: center;
  background: #e6e6e6;
}
.pre {
  margin-right: 0;
}
.swatch {
  width: 9px;
  height: 9px;
  margin-right: 1px;
  box-sizing: border-box;
  background: #fff;
  border: 1px solid #333;
  flex: none;
}
.ltype {
  height: 1px;
  background: #444;
  flex: none;
}

/* main area */
.main {
  flex: none;
  height: 586px;
  display: flex;
  min-height: 0;
}
.side {
  flex: none;
  background: #666;
}
.side.left {
  width: 24px;
  box-sizing: border-box;
  padding-left: 2px;
}
.side.right {
  width: 26px;
  padding-left: 5px;
  box-sizing: border-box;
}
.grip {
  height: 8px;
  width: 17px;
  background: repeating-linear-gradient(#8c8c8c 0 1px, #5c5c5c 1px 3px);
}
.bar {
  width: 17px;
  display: flex;
  flex-direction: column;
  align-items: center;
  background: #e9e9e9;
}
.left .bar {
  height: 342px;
  justify-content: space-around;
}
.modify {
  height: 308px;
  justify-content: space-around;
}
.second {
  margin-top: 8px;
}
.order {
  height: 110px;
  justify-content: space-around;
}
.glyph {
  font-size: 16px;
  line-height: 16px;
  color: #222;
}
.canvas {
  flex: 1;
  min-width: 0;
  background: #212830;
}
.draw {
  width: 937px;
  height: 586px;
  font-family: "Noto Sans CJK SC", sans-serif;
}
.vp {
  font-size: 9px;
  fill: #c8c8c8;
}
.thick {
  fill: none;
  stroke: #fff;
  stroke-width: 4;
}
.thin4 {
  stroke-width: 3.500;
}
.fat {
  fill: none;
  stroke: #fff;
  stroke-width: 7;
}
.mid {
  fill: none;
  stroke: #fff;
  stroke-width: 2.500;
}
.dash {
  fill: none;
  stroke: #fff;
  stroke-width: 2.500;
}
.ucs path,
.ucs rect {
  fill: none;
  stroke: #c8c8c8;
}
.ucs text {
  font-family: "Liberation Sans", sans-serif;
  font-size: 14px;
  fill: #b8b8b8;
}
.ring {
  fill: none;
  stroke: #45494f;
  stroke-width: 10;
}
.cube-top {
  font-size: 20px;
  fill: #999;
  text-anchor: middle;
}
.dir {
  font-size: 14px;
  fill: #b4b6b8;
  text-anchor: middle;
}
.wcs {
  font-family: "Liberation Sans", sans-serif;
  font-size: 8px;
  fill: #c4c6cc;
}
.vscroll {
  flex: none;
  width: 13px;
  position: relative;
  background: #f0f0f0;
}
.up,
.down {
  position: absolute;
  left: 4px;
  width: 0;
  height: 0;
  border: 3px solid transparent;
}
.up {
  top: 4px;
  border-bottom: 4px solid #333;
  border-top: 0;
}
.down {
  bottom: 4px;
  border-top: 4px solid #333;
  border-bottom: 0;
}
.thumb {
  position: absolute;
  left: 1px;
  top: 327px;
  width: 11px;
  height: 11px;
  background: linear-gradient(#fafafa, #cfcfcf);
  border: 1px solid #bbb;
  box-sizing: border-box;
}

/* tabs */
.tabs {
  flex: none;
  height: 14px;
  display: flex;
  padding-left: 24px;
  background: #666;
}
.tabs-l {
  width: 618px;
  display: flex;
  align-items: center;
  background: #ececec;
  font-family: "Liberation Serif", "Noto Sans CJK SC", serif;
  font-size: 10px;
  color: #333;
}
.tab {
  padding: 0 4px;
  line-height: 14px;
  clip-path: polygon(3px 0, 100% 0, calc(100% - 3px) 100%, 0 100%);
  border-right: 1px solid #555;
}
.tab.on {
  margin-left: 2px;
  padding: 0 5px;
  background: #2e2e2e;
  color: #ddd;
}
.hscroll {
  position: relative;
  width: 333px;
  background: #ececec;
}
.lt,
.rt {
  position: absolute;
  top: 4px;
  width: 0;
  height: 0;
  border: 3px solid transparent;
}
.lt {
  left: 8px;
  border-right: 3px solid #333;
  border-left: 0;
}
.rt {
  right: 8px;
  border-left: 3px solid #333;
  border-right: 0;
}

/* dimension toolbar */
.dimband {
  flex: none;
  height: 27px;
  padding: 4px 0 0 24px;
  box-sizing: border-box;
  background: #666;
}
.dimbar {
  display: flex;
  align-items: center;
  width: 501px;
  height: 19px;
  box-sizing: border-box;
  border-left: 5px solid #4f4f4f;
  background: #ededed;
}
.dim-ico {
  width: 17.500px;
}
.sep {
  flex: none;
  width: 1px;
  height: 15px;
  margin: 0 2px;
  background: #bbb;
}
.dimcombo {
  width: 91px;
  margin-right: 1px;
}

/* command line */
.cmd {
  flex: none;
  height: 45px;
  display: flex;
}
.cmd-side {
  flex: none;
  width: 16px;
  display: flex;
  flex-direction: column;
  align-items: center;
  background: #6a6a6a;
}
.dots {
  width: 14px;
  height: 6px;
  margin: 3px 0 1px;
  background: repeating-linear-gradient(90deg, #999 0 1px, #6a6a6a 1px 2px);
}
.close {
  font-size: 11px;
  line-height: 16px;
  font-weight: 700;
  color: #fff;
}
.cmd-body {
  flex: 1;
  min-width: 0;
}
.history {
  height: 27px;
  box-sizing: border-box;
  padding: 2px 0 0 3px;
  background: #b6b6b6;
  font-family: "DejaVu Sans Mono", "Noto Sans CJK SC", monospace;
  font-size: 9.800px;
  line-height: 12.400px;
  color: #262626;
  white-space: pre;
}
.input {
  height: 18px;
  display: flex;
  align-items: center;
  padding-left: 5px;
  background: #fff;
  color: #999;
  font-family: "Noto Sans CJK SC", sans-serif;
}
.input span {
  margin-left: 6px;
}

/* status */
.status {
  flex: none;
  height: 19px;
  display: flex;
  align-items: center;
  border-top: 1px solid #333;
  box-sizing: border-box;
  background: linear-gradient(#6a6a6a, #5a5a5a);
}
.coords {
  flex: none;
  width: 166px;
  padding-left: 9px;
  box-sizing: border-box;
  font-size: 9.500px;
  letter-spacing: 0.2px;
  color: #2f2f2f;
}
.toggles {
  display: flex;
  flex: none;
  width: 579px;
}
.toggle {
  flex: none;
  width: 17.300px;
  height: 17px;
  display: flex;
  align-items: center;
  justify-content: center;
  background: #a6a6a6;
  border-right: 1px solid #777;
  box-sizing: border-box;
}
.toggle.active {
  background: #cfe0ee;
}
.st-right {
  display: flex;
  align-items: center;
  height: 17px;
}
.st-right svg {
  background: #a4a4a4;
}
.model {
  padding: 0 1px;
  line-height: 17px;
  background: #b4b4b4;
  font-family: "Noto Sans CJK SC", sans-serif;
  color: #222;
  white-space: nowrap;
}
.m1 {
  margin-left: 1px;
}
.m2 {
  margin-left: 2px;
}
.m4 {
  margin-left: 4px;
}
.m7 {
  margin-left: 7px;
}
.scale {
  margin-left: 16px;
}
.ratio {
  margin-left: 2px;
  font-family: "Liberation Serif", serif;
  color: #222;
}
.ratio-caret {
  margin-left: 5px;
}
.faded {
  opacity: 0.5;
}
.bulb {
  width: 18px;
  height: 15px;
  margin-left: 5px;
  display: flex;
  justify-content: center;
  background: #a7a7a7;
}
.bulb-caret {
  margin-left: 8px;
  margin-right: 1px;
}
.taskbar {
  flex: none;
  height: 3px;
  display: flex;
  gap: 1px;
  padding-left: 46px;
  background: #2f7ab4;
}
.task {
  width: 44px;
  background: #9ecbe6;
}

/* watermark */
.mark {
  position: absolute;
  left: 765px;
  top: 668px;
  width: 180px;
  height: 84px;
  display: flex;
  align-items: center;
  box-sizing: border-box;
  padding-left: 13px;
  gap: 11px;
  background: #1c2e5c;
}
.mark-text {
  display: flex;
  flex-direction: column;
  color: #c6ccd6;
}
.mark-text strong {
  font-family: "Noto Sans CJK SC", sans-serif;
  font-weight: 400;
  font-size: 25px;
  line-height: 25px;
  letter-spacing: 1.500px;
}
.mark-text small {
  margin-top: 1px;
  font-size: 9.500px;
  line-height: 11px;
  letter-spacing: 1.800px;
  white-space: nowrap;
}
</style>

<style>
html,
body {
  margin: 0;
  background: #5f5f5f;
}
</style>
